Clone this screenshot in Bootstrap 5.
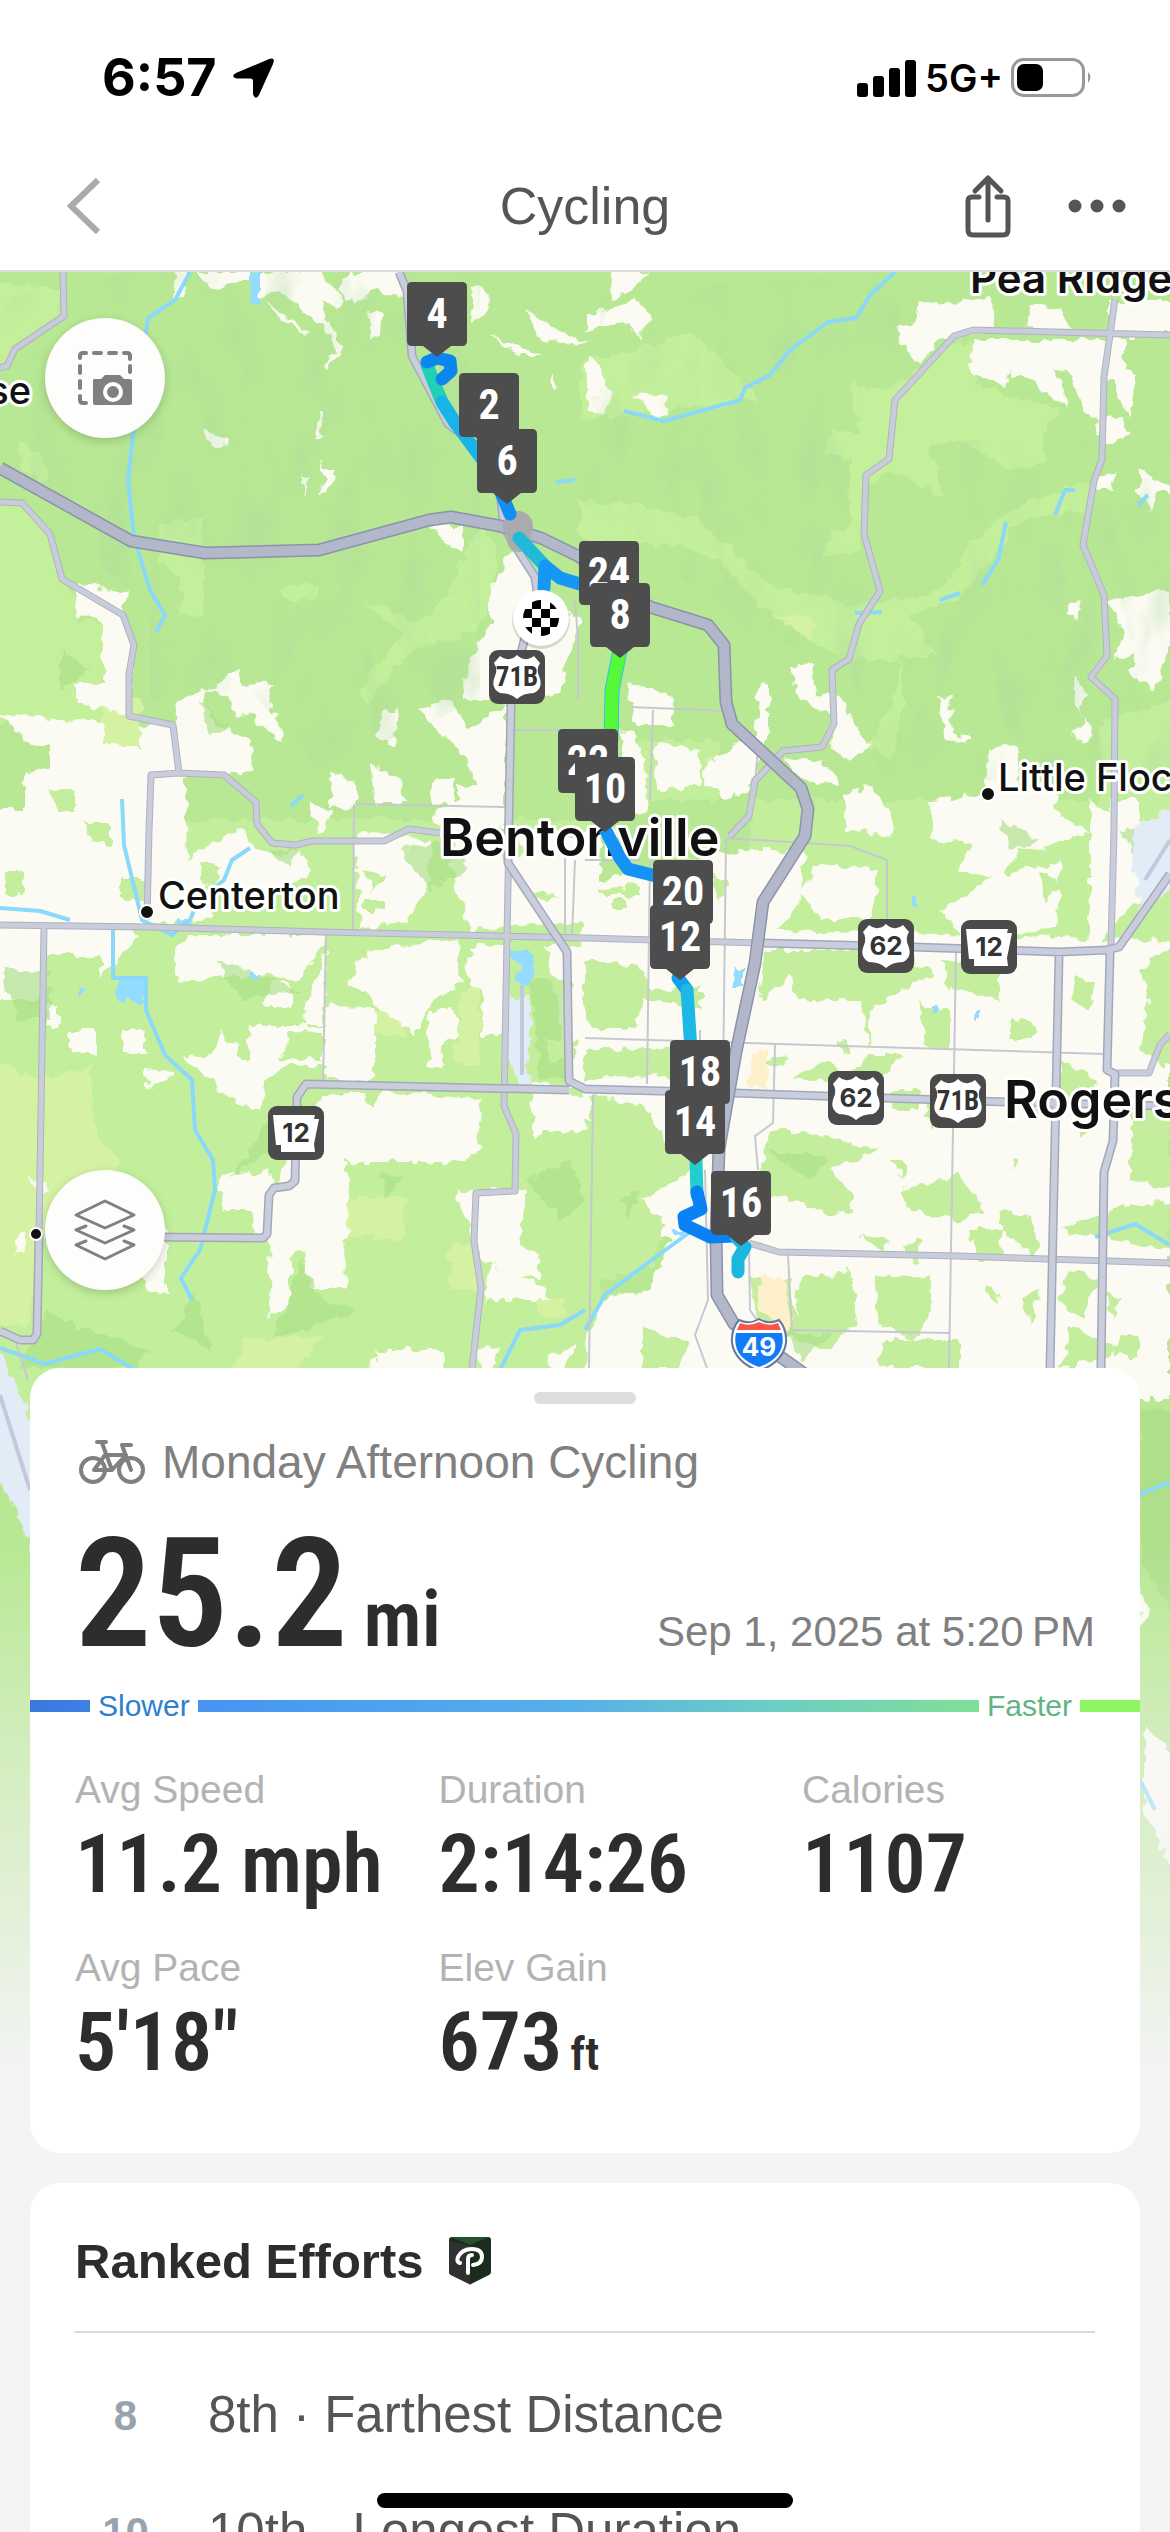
<!DOCTYPE html>
<html lang="en">
<head>
<meta charset="utf-8">
<meta name="viewport" content="width=device-width, initial-scale=1">
<title>Cycling</title>
<link rel="stylesheet" href="https://cdn.jsdelivr.net/npm/bootstrap@5.3.0/dist/css/bootstrap.min.css">
<style>
body{font-family:"Liberation Sans",Arial,sans-serif;background:#f4f4f5;color:#2d2d2e}
.screen{height:100vh}
.statusbar{height:48px;padding:0 77px 0 102px;font-family:Inter,sans-serif;color:#000;margin-top:54px;line-height:1}
.clock{font-size:52px;font-weight:700}
.network{font-size:38px;font-weight:600}
.topbar{height:170px;border-bottom:2px solid #dcdcdc;padding:40px 40px 0}
.topbar>*{flex:1 1 0}
.topbar h1{font-size:52px;color:#555;line-height:60px}
.back-slot{padding-left:20px}
.actions{gap:52px}
.plain{border:0;background:none;padding:0;line-height:0}
.map-layer{height:1920px}
.map-layer svg{width:100%;height:100%}
.map-window{height:1096px;padding:46px 45px 78px}
.round-btn{width:120px;height:120px;border:0;border-radius:50%;background:#fdfdfb;box-shadow:0 3px 10px rgba(0,0,0,.18);padding:0}
.panel{background:#fff;border-radius:30px;margin:0 30px 30px}
.handle{width:102px;height:12px;border-radius:6px;background:#ddd}
.narrow{font-family:"Roboto Condensed","Liberation Sans",sans-serif;font-weight:600}
.title-line{font-size:46px;line-height:52px;color:#808080}
.dist-row{margin:26px 0 14px;padding:0 45px}
.dist{font-size:152px;line-height:160px}
.dist-unit{font-size:78px;line-height:1}
.when{font-size:42px;line-height:1;color:#808080}
.speedbar{height:36px}
.speedbar span{font-size:30px;line-height:36px;padding:0 8px}
.seg{height:12px}
.seg-a{width:60px;background:linear-gradient(90deg,#3a78dc,#3f80e4)}
.seg-b{background:linear-gradient(90deg,#4793f3,#56b0ea 48%,#6cccc6 72%,#80e098)}
.seg-c{width:60px;background:#90f562}
.slow{color:#2e80cc}.fast{color:#60b582}
.stats{display:grid;grid-template-columns:minmax(0,1fr) minmax(0,1fr) 293px;row-gap:30px;padding:42px 45px 61px}
.stats dt{font-size:39px;font-weight:400;line-height:48px;color:#b3b3b3}
.stats dd{font-size:82px;line-height:100px;white-space:nowrap}
.stats small{font-size:46px;line-height:1}
.ranked{padding:48px 45px 0}
.ranked h2{font-size:49px;font-weight:700;line-height:60px}
.ranked hr{border-top:2px solid #d8d8d8;opacity:1;margin:40px 0 24px}
.rank-row{height:117px;font-size:51px;color:#555}
.rank-no{width:101px;font-size:42px;font-weight:700;color:#98a3b0}
.rank-name{padding-left:32px}
.homebar{width:416px;height:15px;border-radius:8px;background:#000;bottom:24px}
.halo{font-family:Inter,sans-serif;fill:#111;stroke:#fff;stroke-width:6px;stroke-linejoin:round;paint-order:stroke}
.pin-no{font-family:"Roboto Condensed","Liberation Sans",sans-serif;font-weight:700;font-size:42px;fill:#fff;text-anchor:middle}
.road-no{font-family:Inter,sans-serif;font-weight:700;font-size:26px;fill:#333;text-anchor:middle}
.road-b{font-family:"Roboto Condensed","Liberation Sans",sans-serif;font-size:27px}
.road-w{fill:#fff}
.hw,.rd,.ln{fill:none;stroke-linejoin:round}
</style>
<script src="https://cdn.jsdelivr.net/npm/bootstrap@5.3.0/dist/js/bootstrap.bundle.min.js"></script>
</head>
<body>
<div class="screen d-flex flex-column overflow-hidden position-relative">
<header class="bg-white flex-shrink-0">
  <div class="statusbar d-flex align-items-center justify-content-between">
    <div class="d-flex align-items-center gap-3"><span class="clock">6:57</span>
      <svg width="42" height="42" viewBox="0 0 42 42"><path d="M35 2.500Q43-1 40 7L26 38Q22.500 44 20 37V24Q20 21.500 18 21.500H4Q-3 19.500 3 16Z"/></svg></div>
    <div class="d-flex align-items-center gap-2">
      <svg width="60" height="38" viewBox="0 0 60 38"><rect y="24" width="11" height="14" rx="3"/><rect x="16" y="17" width="11" height="21" rx="3"/><rect x="32" y="9" width="11" height="29" rx="3"/><rect x="48" y="1" width="11" height="37" rx="3"/></svg>
      <span class="network">5G+</span>
      <svg width="82" height="40" viewBox="0 0 82 40"><rect x="1.500" y="1.500" width="71" height="36" rx="11" fill="none" stroke="#999" stroke-width="3"/><rect x="6" y="6" width="26" height="27" rx="7"/><path d="M77 14q5 5 0 11z" fill="#999"/></svg>
    </div>
  </div>
  <nav class="topbar d-flex align-items-center" aria-label="Activity">
    <div><div class="back-slot"><button class="plain" aria-label="Back"><svg width="48" height="60" viewBox="0 0 48 60" fill="none" stroke="#aaa" stroke-width="6"><path d="M38 4L11 30L38 56"/></svg></button></div></div>
    <h1 class="fw-normal text-center m-0">Cycling</h1>
    <div class="actions d-flex justify-content-end align-items-center">
      <button class="plain" aria-label="Share"><svg width="48" height="64" viewBox="0 0 48 64" fill="none" stroke="#555" stroke-width="5" stroke-linecap="round" stroke-linejoin="round"><path d="M15 23H8Q4 23 4 27V56Q4 61 9 61H39Q44 61 44 56V27Q44 23 40 23H33M24 46V5M11 17L24 4L37 17"/></svg></button>
      <button class="plain" aria-label="More"><svg width="66" height="20" viewBox="0 0 66 20" fill="#555"><circle cx="11" cy="10" r="6.500"/><circle cx="33" cy="10" r="6.500"/><circle cx="55" cy="10" r="6.500"/></svg></button>
    </div>
  </nav>
</header>
<main class="position-relative flex-grow-1">
<div class="map-layer position-absolute top-0 start-0 w-100 overflow-hidden">
<svg viewBox="0 272 1170 1920" preserveAspectRatio="xMidYMin slice" role="img" aria-label="Route map">
<defs>
<filter id="rough" x="-5%" y="-5%" width="110%" height="110%"><feTurbulence type="fractalNoise" baseFrequency=".08" numOctaves="2" seed="4"/><feDisplacementMap in="SourceGraphic" scale="14" xChannelSelector="R" yChannelSelector="G"/></filter>
<filter id="hills" x="0" y="0" width="100%" height="100%"><feTurbulence type="fractalNoise" baseFrequency=".03 .014" numOctaves="3" seed="9" result="n"/><feColorMatrix values="0 0 0 0 .42  0 0 0 0 .68  0 0 0 0 .36  2.2 0 0 0 -1"/><feComposite in2="SourceGraphic" operator="in"/></filter>
<linearGradient id="fade" x1="0" y1="0" x2="0" y2="1"><stop offset="0" stop-color="#f4f4f5" stop-opacity="0"/><stop offset=".35" stop-color="#f4f4f5" stop-opacity=".4"/><stop offset="1" stop-color="#f4f4f5"/></linearGradient>
<g id="pin"><path d="M-25 0H25Q30 0 30 5V59Q30 64 25 64H14L0 75L-14 64H-25Q-30 64-30 59V5Q-30 0-25 0Z" fill="#4d4d4d"/></g>
<g id="usroad"><rect x="-28" width="56" height="54" rx="9" fill="#4a4a4b"/><path d="M-17 6Q-12 10-8 9Q-4 9 0 5Q4 9 8 9Q12 10 17 6L23 13Q19 19 22 26Q27 38 17 43Q6 43 0 49Q-6 43-17 43Q-27 38-22 26Q-19 19-23 13Z" fill="#fff"/></g>
<g id="arroad"><rect x="-28" width="56" height="54" rx="9" fill="#4a4a4b"/><path d="M-23 9H19L18 13H23L18 38L19 46H-15V39H-20Z" fill="#fff"/></g>
</defs>
<rect y="272" width="1170" height="1920" fill="#b8e893"/>
<g filter="url(#rough)">
<path fill="#c4f09b" d="M-20 280L60 290L62 316L15 349L0 370L-20 400ZM-20 500L22 503L50 534L62 579L80 605L78 620L104 624L102 680L130 690L130 720L0 725L-20 730ZM0 600L35 590L62 640L60 670L0 670ZM157 524L203 517L201 577L205 618L181 616L181 580L160 560ZM283 586L319 584L319 600L281 598ZM362 600L422 622L448 592L481 520L496 556L492 600L481 627L455 640L422 642L392 673L369 702L360 695L373 670L403 635ZM20 440L40 455L50 480L20 470ZM580 500L640 505L700 520L730 548L770 585L850 605L910 598L945 585L975 540L1010 510L1060 488L1100 480L1090 510L1020 520L990 560L960 600L910 615L935 655L900 655L905 700L890 760L870 745L895 700L900 660L850 660L810 640L760 605L720 560L680 545L580 540ZM580 360L640 350L690 330L760 400L580 420ZM850 385L890 390L960 340L975 345L975 385L1010 395L1060 410L1040 430L1045 465L1010 470L960 440L930 445L945 500L930 490L890 470L865 485L860 550L820 560L830 535L850 530L850 460L825 455L830 430L860 430Z"/>
<path fill="#c3ef9c" d="M-20 820H600V1460H-20ZM640 740H720V800H640ZM1100 720L1180 700V830H1100ZM750 800H1180V950H750Z"/>
<path fill="#d4f2a1" d="M40 1080L90 1065L95 1135L120 1160L100 1190L95 1230L40 1240ZM-10 1060L40 1080V1240L30 1330L-10 1320ZM375 1010H403V1035H375ZM460 990L480 985V1065L455 1062ZM345 1200L405 1195V1240L345 1235ZM450 1243H478V1290H450ZM101 695H140V745H101ZM770 615L814 618L812 640ZM535 1298H565V1320H540ZM245 1340L325 1335L290 1375H230Z"/>
<path fill="#fcfbf3" d="M0 715L105 723V745L140 746V724L173 726L179 700L206 688L215 690L238 666L243 686L274 684L270 700L284 740L265 733L250 712L238 718L228 697L208 690L204 705L217 724L252 742L254 770L224 775H185L187 860L210 840L240 830L265 855L300 850L310 870L290 890L215 890L210 920L150 925H-10V810H25V770L50 768V745L25 740ZM78 583L130 593L123 610L134 645L129 716L75 700V683H103V622L77 613ZM331 772L357 783V808L330 806ZM372 765L402 780L406 802H374ZM434 780H455V804H430ZM460 786H482V804H460ZM385 710L398 710L393 745L376 735ZM308 805L335 810L320 835ZM418 710L450 700L470 730L506 705V840L440 840L435 810L480 790L460 750L445 735ZM464 680L475 650L490 625V590L510 555L520 552L545 590L580 620L560 690L530 700H465ZM430 525L463 525V552L452 550ZM202 430L228 440L227 447L210 443ZM318 409L323 411L319 420L324 436L316 440ZM318 460L334 472L332 484L318 496L325 480ZM302 474L312 478L302 493ZM188 272L180 300L172 296L176 272ZM195 272H320L345 300L335 310L320 300L330 330L342 345L340 355L325 367L336 350L325 325L300 310L280 290L262 298L290 320L310 333L305 335L275 312L258 293L250 280L210 290ZM350 272H400L407 300L375 290L355 305L340 290ZM370 310L384 315L383 335L367 338ZM473 285L490 295L485 315L470 325ZM525 310L550 325L590 345L540 340ZM490 335L540 355L520 355ZM552 373L560 380L555 390ZM610 272H650L630 290L612 300ZM587 315L640 300L650 315L640 340L632 322L587 330ZM587 355L600 365L612 395L605 415L587 410ZM632 393L667 395V410L658 420ZM920 305L990 298L992 330L940 340L918 365L900 340L895 325L915 325ZM1030 305L1060 308L1075 330L1026 328ZM1110 300H1180V335H1110ZM973 340H1125V370L1135 375L1130 422L1122 400L1115 380H1105V425L1080 410L1070 375L1055 365L1070 410L1050 395L1030 378H1010V365L1005 385L972 375ZM1098 420L1120 417L1130 435L1112 442L1095 435ZM1095 478L1118 473L1110 490L1097 492ZM1138 470L1175 487V495L1160 490L1150 512L1138 492ZM1108 600L1170 590V650L1155 690L1130 675L1135 655L1115 660L1125 630ZM1070 600L1080 603L1076 618L1070 618ZM630 683L655 690L673 700V725H632ZM760 685L768 680V760L755 750ZM790 665L812 663L815 695L830 690L845 702L855 730L870 745L850 760L830 750L835 715L800 700ZM705 765L745 740L760 760L748 790L725 800L705 780ZM785 755L830 765L840 785L790 775ZM845 795L870 785L890 810L895 838L845 830ZM938 697H950L952 735L970 738V743L945 740ZM989 747L1015 743L1020 790L1050 780L1060 820L1090 830L1040 850L930 840L930 800L985 795ZM1110 800L1140 800L1140 870L1110 880ZM1072 675L1085 690L1080 710L1095 730L1090 740L1070 735L1085 720L1075 700ZM620 730L635 735L647 760L645 810L620 820ZM655 740L700 750V785L655 790ZM740 850H805L800 900L770 940H610L600 880L640 870ZM580 885L650 870V1120H585Z"/>
<path fill="#fcfbf3" d="M-10 925H120L140 935L100 980V955H45V1000H0L-10 1000ZM175 950L190 935L330 935L300 980L260 975L175 980ZM270 982H290V1005H265ZM325 950L300 1020L310 1028L325 1025V1033L290 1032L285 1050L275 1056L292 1060H323V1007L375 1008V1080H325V1065L290 1065L265 1080L262 1110L220 1095L215 1080L180 1058L212 1055L220 1035L238 1045V1062H248L250 1025L325 1025ZM375 950L458 940L460 985L432 1000L415 1035L376 1005L350 985L358 960ZM430 1012L450 1008L460 1035L440 1045L445 1068H428ZM480 945H507V1035H482V990L468 985L465 955ZM145 1070L177 1072L150 1090ZM71 1030H95V1053H71ZM122 1030H145V1053H122ZM45 1005L58 1008V1025H45ZM220 1175L270 1172L275 1190V1235L255 1230L252 1210L222 1210ZM323 1095L365 1095L375 1108L380 1090L480 1100L478 1155L455 1162H348V1205L345 1288H310L300 1250L310 1247L290 1255V1300L270 1318L271 1190ZM455 1190H525V1205L518 1240L540 1260L540 1280L515 1275L480 1260ZM375 1350H445V1375H372ZM470 1350L500 1348L490 1375ZM545 1358L575 1348L560 1375ZM490 1265L540 1285L550 1300H485ZM155 1215L167 1230V1290H145L140 1260ZM30 1175L50 1190L40 1200ZM355 830L430 840V880L410 920L360 930ZM440 830H600V920L470 930ZM530 1080L590 1100L585 1130H535ZM530 1105L560 1108L535 1140ZM15 1235H25V1255H15ZM545 945H600V1090H572Z"/>
<path fill="#fcfbf3" d="M590 925L1170 940V1400H590L585 1340L600 1300L650 1290L670 1240L640 1230L605 1120L585 1090ZM820 865L880 870L870 920L820 920L800 890ZM940 910L990 880L1060 860L1055 930L960 935ZM1090 800L1140 830V900L1090 950ZM975 830L1030 835L1000 880L960 870ZM1000 870L1060 890V910L990 900Z"/>
<path fill="#c4ed9d" d="M585 960L640 965L650 990L700 985V1010L645 1000L635 1030L600 1030L585 1020ZM585 1050L650 1048L720 1055L710 1085L650 1075L585 1080ZM590 1095L645 1105L665 1140L700 1160L685 1175L640 1200L665 1225L650 1270L600 1280ZM765 950H900L935 975L900 990L870 1010L870 1050L860 1000L800 1000L790 975L760 1000ZM940 960L1000 965L1000 1000L950 990ZM770 1130L820 1135L880 1150L830 1170L850 1200L830 1215L780 1195L755 1200ZM900 1190L960 1175L985 1210L960 1220L910 1210ZM750 1275L790 1280L800 1340L755 1330ZM800 1280L850 1270L860 1320L830 1350L795 1340ZM875 1275L930 1278V1310L915 1340L880 1325ZM920 1005L950 1010L950 1050L925 1045ZM1010 1020L1035 1025V1040H1010ZM870 1055L905 1055L880 1080L840 1085ZM1060 1060L1100 1080L1090 1100L1060 1095ZM1075 975L1095 985L1090 1010L1070 1000ZM1140 970L1180 940V1070L1140 1050L1150 1000ZM1130 1110L1170 1100V1190L1130 1180ZM1125 1205L1170 1200V1250L1060 1230ZM1070 1270L1100 1280L1080 1320L1060 1300ZM1000 1210L1030 1215L1040 1260L1000 1230ZM1070 1325L1120 1350L1060 1370ZM1020 1300L1040 1290L1030 1325ZM1120 1335H1140V1355H1115ZM890 1090H920L915 1110H895ZM890 1160H905V1180L895 1170ZM820 1190H850V1215L825 1210ZM1140 1050L1170 1040L1165 1070ZM900 1245L920 1240L915 1265ZM970 1230H1000L1005 1260H980ZM925 1095L940 1100L930 1130ZM880 1340H960V1368H880ZM640 1330L690 1340L680 1370H640ZM600 890L640 885V895H600ZM710 870L730 885L720 900ZM1040 870L1065 885L1045 900Z"/>
<path fill="#abdf88" opacity=".65" d="M45 1310L90 1330L150 1350L135 1370L20 1368ZM195 1290L210 1350L175 1330ZM230 1180L280 1100L270 1150ZM290 1300L300 1260L320 1300L360 1310L270 1340ZM400 850L450 840L470 870L430 890ZM0 970H50V1020H20ZM525 1180L570 1160L585 1200L560 1220ZM530 980H567V1080H540ZM380 1170L400 1180L385 1200ZM770 1150L830 1160L810 1180ZM620 1200L640 1190L630 1220ZM1120 830H1170V870L1130 850ZM1000 820L1040 840L1010 850ZM270 850L300 850L290 870ZM785 1330L830 1335L800 1360ZM120 880H145V900H120ZM60 650L90 670L60 690ZM200 700L230 730L210 735ZM215 960L300 990L240 1000Z"/>
<path fill="#c4ed9d" d="M120 878H142V900H120ZM5 872H24V895H5ZM85 822H110V845H92ZM200 862L222 866L215 890L202 885ZM48 790H75V812H60ZM365 868L385 875L372 892ZM365 900H385V912H365ZM525 890L560 895L545 903ZM500 825L530 850L505 860ZM545 975L575 985L560 1000ZM545 1040H575V1060H548ZM612 900H628V908H612ZM655 925L672 930L660 940ZM680 860H700V868H680ZM795 1075L830 1060L850 1080L810 1082ZM840 1040H850V1052H840ZM760 1060L790 1056L780 1068ZM860 1235L890 1240L880 1250ZM700 1110L712 1120L705 1140ZM1080 1110L1092 1130L1080 1138ZM1012 1155L1020 1158L1018 1170ZM1105 1290L1120 1300L1112 1320ZM985 1285L1000 1292L998 1305ZM1030 1110L1040 1105L1038 1115Z"/>
<path fill="#e2ecf6" d="M508 997H531L528 1086H518L505 1045ZM1130 830L1180 800V880L1140 910ZM-10 1360L0 1350L36 1435V1560L-10 1450Z"/>
<path fill="#fff0cc" d="M751 1050H767V1088H750ZM762 1275L785 1278L793 1335L758 1310Z"/>
<path fill="#93dcff" d="M120 978H146V1003L120 1000ZM77 985L87 990L84 997ZM510 950L525 950L535 965L530 985L515 980L520 965ZM735 967H744V987H732ZM930 1003H937V1014H930ZM976 1011H982V1022H976ZM912 896H919V907H912ZM249 974H258V979H249ZM672 1229H690L678 1236ZM178 922H191V927H178ZM250 272H260V302H250Z"/>
<path fill="#fcfbf3" d="M1135 1375H1180V1395H1140ZM1141 1590L1150 1610L1140 1625ZM1145 1725L1175 1755V1880L1145 1810Z"/>
<path fill="#a9dd88" opacity=".7" d="M1140 1410H1180V1620L1140 1560Z"/>
</g>
<path filter="url(#hills)" opacity=".42" d="M130 272H480V700L320 770L250 690L150 700V600L60 540L0 400V300ZM580 400L860 330L870 660L760 640L580 500ZM600 290L900 272V360L700 440L600 400ZM960 440H1170V780H880L840 630L960 600Z"/>
<g fill="none" stroke="#8ad8fa" stroke-width="4" stroke-linejoin="round">
<path d="M190 272L175 300L148 318L137 400L128 480L134 537L150 590L165 615L156 632M122 799L124 845L142 920L172 935L190 920L195 908M214 888L224 880L232 860L250 848M113 928V978H146V1010L165 1055L192 1080L195 1130L213 1160L215 1190L200 1250L181 1278L192 1300M0 908L40 911L70 920M0 1348L45 1364L100 1349L135 1370M624 411L664 421L740 400L745 388L770 375L790 350L828 322L856 318L870 295L895 272M1006 522L998 560L982 585M940 600L960 593M1055 515L1065 490L1075 490M1148 495L1138 505M855 613L882 612M500 1370L520 1330L560 1325L585 1310M585 1330L605 1295L645 1265L690 1232M1095 1237L1135 1224L1170 1245M291 806L303 795M1140 1494L1170 1482M1140 1780L1155 1810M556 482L575 480"/></g>
<g class="ln" stroke="#c5c8d1" stroke-width="2"><path d="M354 804L353 931M356 804L504 807M326 934L323 1084M585 838L500 830M726 838L723 1084M650 860L647 1084M585 1038L1104 1054M956 952L949 1368M775 1045L773 1123L755 1136L758 1170M593 1095L589 1368M727 838L850 846L887 860V922M510 730H578M630 707L730 711M653 710L650 800M575 600L578 640V700M755 781L758 750M705 1170L708 1300L695 1335L707 1368M749 1250L750 1310L790 1368M793 1330L949 1333M788 1255L792 1330M575 860L572 937M565 830V937M640 860H585M560 610L570 615M15 1340L28 1380M700 1090V1030"/></g>
<path class="rd" stroke="#aeb3c4" stroke-width="7" d="M63 272L64 316L15 349L7 366L0 368M0 502L22 503L50 534L62 579L123 615L134 645L129 674V716L173 725L179 773L224 775L256 802L257 824L272 843L295 845L313 841H384L409 829L440 833M179 773L151 775L149 830L147 920M44 927L39 1234M0 925L149 927L325 932L585 938L760 943M507 938L504 1106L516 1134L515 1191L476 1193L474 1241L481 1288L472 1368M509 830L507 938M1115 299L1104 377L1102 459L1094 481L1083 545L1104 595L1107 656L1091 677L1115 699L1114 830L1111 945M1170 335L973 330L954 336L895 400L889 459L866 475L864 534L880 591L859 624L849 659L832 670L834 724L822 747L783 751L755 781L749 816L730 836M749 1243L779 1252L958 1256L1170 1263M1117 1073H1149L1160 1045L1170 1034"/>
<path class="rd" stroke="#c9ccd9" stroke-width="5" d="M63 272L64 316L15 349L7 366L0 368M0 502L22 503L50 534L62 579L123 615L134 645L129 674V716L173 725L179 773L224 775L256 802L257 824L272 843L295 845L313 841H384L409 829L440 833M179 773L151 775L149 830L147 920M44 927L39 1234M0 925L149 927L325 932L585 938L760 943M507 938L504 1106L516 1134L515 1191L476 1193L474 1241L481 1288L472 1368M509 830L507 938M1115 299L1104 377L1102 459L1094 481L1083 545L1104 595L1107 656L1091 677L1115 699L1114 830L1111 945M1170 335L973 330L954 336L895 400L889 459L866 475L864 534L880 591L859 624L849 659L832 670L834 724L822 747L783 751L755 781L749 816L730 836M749 1243L779 1252L958 1256L1170 1263M1117 1073H1149L1160 1045L1170 1034"/>
<g class="rd"><path stroke="#a3a8bc" stroke-width="9" d="M399 272L407 291L412 356L448 424L476 445L500 491L504 527L519 552L535 577L537 591L522 649L511 704L508 863L567 952L569 1081L585 1089L734 1093L1007 1102L1170 1106M569 1090L306 1084L297 1097L295 1181L289 1186L274 1188L269 1195L267 1234L263 1238L45 1236M39 1234L37 1334L33 1340H20L0 1331M760 943L913 947L1059 952L1107 950L1119 947L1170 874M1059 956L1050 1368M1110 952L1107 1070L1115 1074L1113 1141L1104 1172L1101 1368"/>
<path stroke="#c9cddc" stroke-width="6" d="M399 272L407 291L412 356L448 424L476 445L500 491L504 527L519 552L535 577L537 591L522 649L511 704L508 863L567 952L569 1081L585 1089L734 1093L1007 1102L1170 1106M569 1090L306 1084L297 1097L295 1181L289 1186L274 1188L269 1195L267 1234L263 1238L45 1236M39 1234L37 1334L33 1340H20L0 1331M760 943L913 947L1059 952L1107 950L1119 947L1170 874M1059 956L1050 1368M1110 952L1107 1070L1115 1074L1113 1141L1104 1172L1101 1368"/></g>
<g class="hw"><path stroke="#8b93ab" stroke-width="13" d="M0 468L131 541L205 553L319 550L429 520L451 517L500 526L541 538L578 556L650 607L708 625L724 645L726 702L732 724L801 788L808 809L805 836L763 902L755 963L736 1052L719 1149L716 1234L717 1295L734 1324L809 1377"/><path stroke="#b2b7ca" stroke-width="10" d="M0 468L131 541L205 553L319 550L429 520L451 517L500 526L541 538L578 556L650 607L708 625L724 645L726 702L732 724L801 788L808 809L805 836L763 902L755 963L736 1052L719 1149L716 1234L717 1295L734 1324L809 1377"/></g>
<path stroke="#c3c9dc" stroke-width="4" fill="none" d="M522 985V1075M1170 840L1145 880M0 1395L30 1490"/>
<circle cx="518" cy="526" r="15" fill="#aaabad"/><circle cx="519" cy="540" r="12" fill="#aaabad"/>
<g fill="none" stroke-width="13" stroke-linecap="round" stroke-linejoin="round">
<path stroke="#1fd0b4" d="M427 365L433 380L442 402L456 424"/><path stroke="#0a86ee" d="M427 362L437 358L450 361L451 371L442 379"/><path stroke="#18b4e8" d="M442 402L456 424L490 470"/><path stroke="#128ff0" d="M500 490L510 514"/><path stroke="#21b9d8" d="M519 538L545 566"/><path stroke="#1597f5" d="M545 566L544 588M545 566L560 578L580 584L612 596"/><path stroke="#2ec5e0" stroke-width="15" d="M620 650L612 690L611 740"/><path stroke="#55f93a" d="M620 650L612 690L611 735"/><path stroke="#11a0ee" d="M678 978L687 990"/><path stroke="#1eb8e6" d="M687 990L691 1050"/><path stroke="#22cdd0" d="M696 1160L697 1195"/><path stroke="#0b82f4" d="M697 1192L701 1209L684 1217L685 1225L710 1237L734 1236"/><path stroke="#1cb7dc" d="M736 1237L745 1247L738 1259V1272"/>
</g>
<g class="halo" font-size="38" font-weight="500"><text x="158" y="909">Centerton</text><text x="998" y="791">Little Flock</text><text x="31" y="404" text-anchor="end">se</text><text x="970" y="293" font-size="42" font-weight="600">Pea Ridge</text></g>
<g class="halo" font-size="52" font-weight="600"><text x="440" y="856">Bentonville</text><text x="1004" y="1118">Rogers</text></g>
<g fill="#111" stroke="#fff" stroke-width="2"><circle cx="147" cy="912" r="7"/><circle cx="988" cy="794" r="7"/><circle cx="36" cy="1234" r="6"/></g>
<path fill="none" stroke="#1492f5" stroke-width="13" stroke-linejoin="round" d="M605 829L620 858L628 869L660 877"/>
<g transform="translate(517 650)"><use href="#usroad"/><text class="road-no road-b" y="36">71B</text></g>
<g transform="translate(296 1106)"><use href="#arroad"/><text class="road-no" y="36">12</text></g>
<g transform="translate(886 919)"><use href="#usroad"/><text class="road-no" y="36">62</text></g>
<g transform="translate(989 920)"><use href="#arroad"/><text class="road-no" y="36">12</text></g>
<g transform="translate(856 1071)"><use href="#usroad"/><text class="road-no" y="36">62</text></g>
<g transform="translate(958 1074)"><use href="#usroad"/><text class="road-no road-b" y="36">71B</text></g>
<g transform="translate(759 1319)"><path d="M-20 1Q-10 6 0 0Q10 6 20 1Q28 10 27 24Q24 43 0 52Q-24 43-27 24Q-28 10-20 1Z" fill="#fff" stroke="#68799e" stroke-width="2"/><path d="M-19 4Q-10 8 0 3Q10 8 19 4L22 11H-22Z" fill="#fb5448"/><path d="M-23 14H23Q28 38 0 48Q-28 38-23 14Z" fill="#127cf8"/><text class="road-no road-w" y="37">49</text></g>
<circle cx="541" cy="620" r="29" fill="#000" opacity=".15"/><circle cx="541" cy="618" r="28" fill="#fff"/>
<clipPath id="disc"><circle cx="541" cy="618" r="18"/></clipPath><g clip-path="url(#disc)"><path d="M532 600H541V609H532ZM550 600H559V609H550ZM523 609H532V618H523ZM541 609H550V618H541ZM532 618H541V627H532ZM550 618H559V627H550ZM523 627H532V636H523ZM541 627H550V636H541Z"/></g>
<g>
<g transform="translate(437 282)"><use href="#pin"/><text class="pin-no" y="46">4</text></g>
<g transform="translate(489 373)"><use href="#pin"/><text class="pin-no" y="46">2</text></g>
<g transform="translate(507 429)"><use href="#pin"/><text class="pin-no" y="46">6</text></g>
<g transform="translate(609 541)"><use href="#pin"/><text class="pin-no" y="46">24</text></g>
<g transform="translate(620 583)"><use href="#pin"/><text class="pin-no" y="46">8</text></g>
<g transform="translate(588 729)"><use href="#pin"/><text class="pin-no" y="46">22</text></g>
<g transform="translate(605 757)"><use href="#pin"/><text class="pin-no" y="46">10</text></g>
<g transform="translate(683 860)"><use href="#pin"/><text class="pin-no" y="46">20</text></g>
<g transform="translate(680 905)"><use href="#pin"/><text class="pin-no" y="46">12</text></g>
<g transform="translate(700 1040)"><use href="#pin"/><text class="pin-no" y="46">18</text></g>
<g transform="translate(695 1090)"><use href="#pin"/><text class="pin-no" y="46">14</text></g>
<g transform="translate(741 1171)"><use href="#pin"/><text class="pin-no" y="46">16</text></g>
</g>
<rect y="1540" width="1170" height="540" fill="url(#fade)"/><rect y="2079" width="1170" height="120" fill="#f4f4f5"/>
</svg>
</div>
<div class="position-relative">
  <div class="map-window d-flex flex-column justify-content-between align-items-start">
    <button class="round-btn" aria-label="Snapshot"><svg width="56" height="56" viewBox="0 0 56 56" fill="none" stroke="#808080" stroke-width="4" stroke-linecap="round"><path d="M3 8V6Q3 3 6 3H9M17 3H24M32 3H39M47 3H50Q53 3 53 6V9M53 16V22M3 16V23M3 31V38M3 46V50Q3 53 6 53H9"/><path d="M17 29H24L28 25H43L47 29H53Q55 29 55 31V53Q55 55 53 55H18Q16 55 16 53V31Q16 29 17 29Z" fill="#808080" stroke="none"/><circle cx="36" cy="42" r="8" stroke="#fff" stroke-width="4"/></svg></button>
    <button class="round-btn" aria-label="Map layers"><svg width="64" height="64" viewBox="0 0 64 64" fill="none" stroke="#808080" stroke-width="3" stroke-linejoin="round" stroke-linecap="round"><path d="M32 3L61 17L32 30L3 17ZM13 28L3 32L32 45L61 32L51 28M13 43L3 47L32 61L61 47L51 43"/></svg></button>
  </div>
  <section class="panel pt-4">
    <div class="handle mx-auto"></div>
    <div class="d-flex align-items-center px-5 mt-4 pt-2 title-line gap-3">
      <svg width="68" height="46" viewBox="0 0 68 46" fill="none" stroke="#808080" stroke-width="4" stroke-linecap="round" stroke-linejoin="round"><circle cx="15" cy="31" r="12"/><circle cx="53" cy="31" r="12"/><path d="M19 3H28M24 4L34 31M44 6H53M44 6L53 31M48 16L34 31H16L27 16H47"/></svg>
      <span>Monday Afternoon Cycling</span>
    </div>
    <div class="dist-row d-flex justify-content-between align-items-baseline">
      <div class="narrow dist">25.2<span class="dist-unit ms-3">mi</span></div>
      <div class="when">Sep 1, 2025 at 5:20&#8201;PM</div>
    </div>
    <div class="speedbar d-flex align-items-center"><div class="seg seg-a"></div><span class="slow">Slower</span><div class="seg seg-b flex-grow-1"></div><span class="fast">Faster</span><div class="seg seg-c"></div></div>
    <dl class="stats mb-0">
      <div><dt>Avg Speed</dt><dd class="narrow m-0">11.2 mph</dd></div>
      <div><dt>Duration</dt><dd class="narrow m-0">2:14:26</dd></div>
      <div><dt>Calories</dt><dd class="narrow m-0">1107</dd></div>
      <div><dt>Avg Pace</dt><dd class="narrow m-0">5'18"</dd></div>
      <div><dt>Elev Gain</dt><dd class="narrow m-0">673<small class="ms-2">ft</small></dd></div>
    </dl>
  </section>
  <section class="panel ranked">
    <div class="d-flex align-items-center gap-4"><h2 class="m-0">Ranked Efforts</h2>
      <svg width="44" height="50" viewBox="0 0 44 50"><path d="M4 1H40Q43 1 43 4V36Q43 38 41 39L23 48Q22 49 21 48L3 39Q1 38 1 36V4Q1 1 4 1Z" fill="#1b2c1d"/><path d="M1 5V36Q1 38 3 39L22 48V10Z" fill="#303232"/><path d="M3 1H41L22 9Z" fill="#24512f"/><path d="M12 27Q8 26 10 21Q14 13 24 13Q34 13 34 21Q34 28 25 29M20 37V23Q20 19 24 19" fill="none" stroke="#fff" stroke-width="4" stroke-linecap="round"/></svg>
    </div>
    <hr>
    <div class="rank-row d-flex align-items-center"><span class="rank-no text-center">8</span><span class="rank-name">8th · Farthest Distance</span></div>
    <div class="rank-row d-flex align-items-center"><span class="rank-no text-center">10</span><span class="rank-name">10th · Longest Duration</span></div>
  </section>
</div>
</main>
<div class="homebar position-absolute start-50 translate-middle-x"></div>
</div>
</body>
</html>
